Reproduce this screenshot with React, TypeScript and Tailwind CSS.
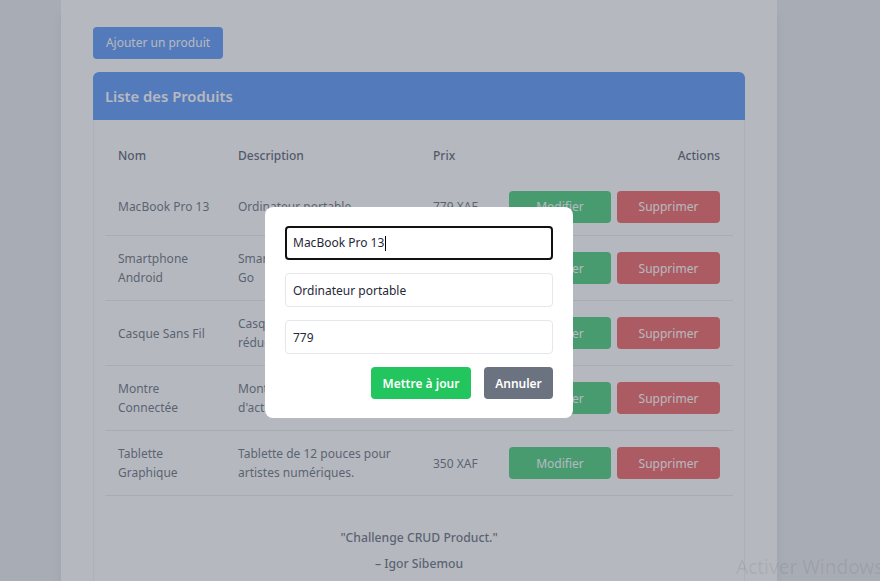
import React from 'react';

type Product = {
  nom: string;
  description: string;
  prix: string;
};

const PRODUCTS: Product[] = [
  { nom: 'MacBook Pro 13', description: 'Ordinateur portable', prix: '779 XAF' },
  { nom: 'Smartphone Android', description: 'Smartphone Android de 128 Go', prix: '250 XAF' },
  { nom: 'Casque Sans Fil', description: 'Casque Bluetooth avec réduction de bruit', prix: '120 XAF' },
  { nom: 'Montre Connectée', description: 'Montre connectée avec suivi d\'activité', prix: '199 XAF' },
  { nom: 'Tablette Graphique', description: 'Tablette de 12 pouces pour artistes numériques.', prix: '350 XAF' },
];

const GRID = 'grid grid-cols-[120px_195px_76px_1fr]';

function ProductRow({ product, first }: { product: Product; first: boolean }) {
  return (
    <div
      className={`${GRID} items-center border-b border-[#e5e7eb] text-[12px] leading-[19px] text-[#4b5563] ${
        first ? 'h-[58px]' : 'h-[65px]'
      }`}
    >
      <div className="pl-[13px] pr-2">{product.nom}</div>
      <div className="pl-[13px] pr-2">{product.description}</div>
      <div className="pl-[13px]">{product.prix}</div>
      <div className="flex justify-end gap-[6px] pr-[13px]">
        <button className="h-8 w-[102px] rounded bg-[#22c55e] text-[12px] text-white">Modifier</button>
        <button className="h-8 w-[103px] rounded bg-[#ef4444] text-[12px] text-white">Supprimer</button>
      </div>
    </div>
  );
}

export default function App() {
  return (
    <div
      className="relative h-[581px] w-[880px] overflow-hidden bg-[#e5e7eb]"
      style={{ fontFamily: '"Noto Sans", "Open Sans", sans-serif' }}
    >
      {/* page container */}
      <div className="ml-[61px] h-[700px] w-[716px] bg-white px-8 pt-[27px] shadow-lg">
        <button className="h-8 w-[130px] rounded bg-[#3b82f6] text-[12px] text-white">Ajouter un produit</button>

        <div className="mt-[13px]">
          <div className="flex h-12 items-center rounded-t-md bg-[#3b82f6] px-3 pt-px text-[14.8px] font-semibold text-white">
            Liste des Produits
          </div>

          <div className="h-[600px] border-x border-[#eceef1] px-[11px] pt-3">
            {/* en-tête du tableau */}
            <div className={`${GRID} h-[46px] items-center pt-px text-[12px] font-medium text-[#374151]`}>
              <div className="pl-[13px]">Nom</div>
              <div className="pl-[13px]">Description</div>
              <div className="pl-[13px]">Prix</div>
              <div className="pr-[13px] text-right">Actions</div>
            </div>

            {PRODUCTS.map((p, i) => (
              <ProductRow key={p.nom} product={p} first={i === 0} />
            ))}

            <div className="mt-[29px] text-center text-[12.2px] font-medium leading-[26px] text-[#4b5563]">
              <p>"Challenge CRUD Product."</p>
              <p>– Igor Sibemou</p>
            </div>
          </div>
        </div>
      </div>

      {/* overlay du modal */}
      <div className="absolute inset-0 bg-[#6b7280]/50" />

      <div className="absolute left-[265px] top-[207px] w-[308px] rounded-lg bg-white px-5 pb-[19px] pt-[19px]">
        <div className="flex flex-col gap-[13px] text-[12px] text-[#1f2937]">
          <div className="flex h-[34px] items-center rounded border-2 border-[#111111] px-[6px]">
            <span>MacBook Pro 13</span>
            <span className="ml-px inline-block h-[15px] w-px bg-black" />
          </div>
          <input
            readOnly
            defaultValue="Ordinateur portable"
            className="h-[34px] w-full rounded border border-[#e5e7eb] px-[7px] outline-none"
          />
          <input
            readOnly
            defaultValue="779"
            className="h-[34px] w-full rounded border border-[#e5e7eb] px-[7px] outline-none"
          />
        </div>
        <div className="mt-[13px] flex justify-end gap-[13px]">
          <button className="h-8 w-[100px] rounded bg-[#22c55e] pt-px text-[12px] font-semibold text-white">
            Mettre à jour
          </button>
          <button className="h-8 w-[69px] rounded bg-[#6b7280] pt-px text-[12px] font-semibold text-white">
            Annuler
          </button>
        </div>
      </div>

      {/* filigrane windows */}
      <div className="pointer-events-none absolute left-[736px] top-[553px] whitespace-nowrap text-[19px] text-black/[0.08]">
        Activer Windows
      </div>
    </div>
  );
}
